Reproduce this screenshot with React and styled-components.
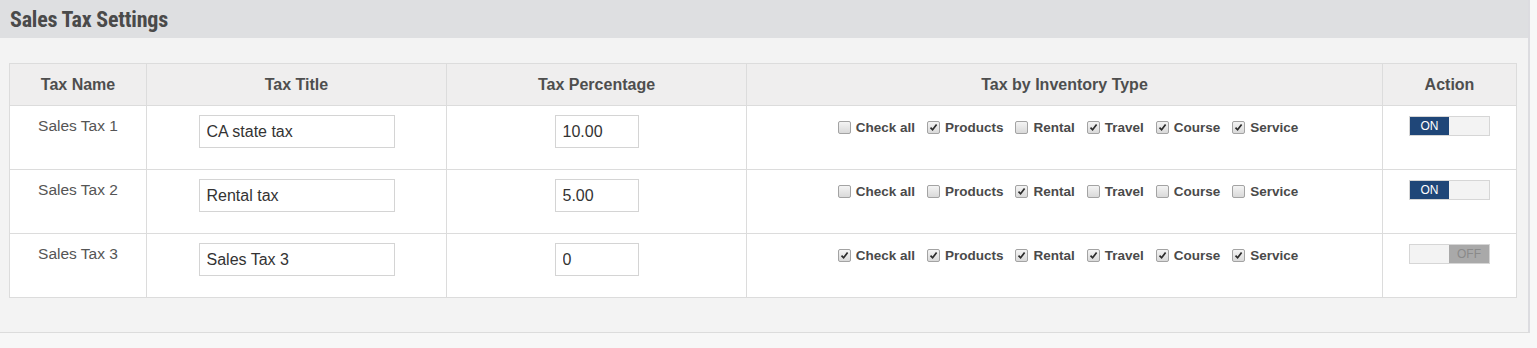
import React from "react"
import styled, { createGlobalStyle } from "styled-components"

const GlobalStyle = createGlobalStyle`
  html, body {
    margin: 0;
    padding: 0;
    background: #f7f7f7;
    font-family: "Liberation Sans", Arial, sans-serif;
  }
`

const Panel = styled.section`
  width: 1528px;
  height: 332px;
  background: #f3f3f3;
  border-right: 2px solid #dcdce0;
  border-bottom: 1px solid #dcdcdc;
  box-sizing: content-box;
`

const PanelHeader = styled.div`
  height: 38px;
  background: #dedfe1;
  display: flex;
  align-items: center;
  padding-left: 10px;
`

const Title = styled.h2`
  margin: 0;
  font-family: "Liberation Sans Narrow", "Roboto Condensed", Roboto, sans-serif;
  font-weight: 700;
  font-size: 22px;
  color: #4a4a4a;
  letter-spacing: -0.2px;
`

const Body = styled.div`
  padding: 25px 13px 0 9px;
`

const Table = styled.table`
  width: 1508px;
  border-collapse: collapse;
  table-layout: fixed;
  background: #fff;
`

const Th = styled.th`
  height: 41px;
  padding: 0 8px;
  background: #efeeee;
  border: 1px solid #dcdcdc;
  font-size: 16px;
  font-weight: 700;
  color: #4e4e4e;
  text-align: center;
  vertical-align: middle;
`

const Td = styled.td`
  height: 64px;
  box-sizing: border-box;
  padding: 9px 8px 0;
  border: 1px solid #dcdcdc;
  text-align: center;
  vertical-align: top;
`

const NameText = styled.div`
  font-size: 15.5px;
  line-height: 22px;
  color: #555;
`

const TextInput = styled.input`
  box-sizing: border-box;
  width: ${props => props.$width}px;
  height: 33px;
  padding: 0 7px;
  border: 1px solid #d4d4d4;
  background: #fff;
  font-family: "Liberation Sans", Arial, sans-serif;
  font-size: 16px;
  color: #333;
  outline: none;
`

const CheckGroup = styled.div`
  display: flex;
  justify-content: center;
  align-items: center;
  gap: 12px;
  height: 22px;
  margin: 1px 0 0 7px;
`

const CheckItem = styled.label`
  display: flex;
  align-items: center;
  gap: 5px;
  font-size: 13.5px;
  font-weight: 700;
  color: #4a4a4a;
`

const Box = styled.span`
  box-sizing: border-box;
  width: 13px;
  height: 13px;
  border: 1px solid #a3a3a3;
  border-radius: 2px;
  background: linear-gradient(#f4f4f4, #d9d9d9);
  display: flex;
  align-items: center;
  justify-content: center;
`

const Toggle = styled.div`
  display: inline-flex;
  width: 81px;
  height: 20px;
  box-sizing: border-box;
  border: 1px solid #d6d6d6;
  margin-top: 1px;
  font-size: 12px;
  background: #f3f3f3;
`

const ToggleHalf = styled.span`
  width: ${props => props.$w}px;
  display: flex;
  align-items: center;
  justify-content: center;
  background: ${props => props.$bg};
  color: ${props => props.$color};
`

const Checkbox = ({ checked, label }) => (
  <CheckItem>
    <Box>
      {checked && (
        <svg width="9" height="9" viewBox="0 0 9 9">
          <path d="M1.5 4.6 L3.6 6.8 L7.6 1.6" fill="none" stroke="#2b2b2b" strokeWidth="1.7" />
        </svg>
      )}
    </Box>
    {label}
  </CheckItem>
)

const Switch = ({ on }) => (
  <Toggle>
    {on ? (
      <>
        <ToggleHalf $w={39} $bg="#1f4678" $color="#fff">ON</ToggleHalf>
        <ToggleHalf $w={40} $bg="#f3f3f3" />
      </>
    ) : (
      <>
        <ToggleHalf $w={39} $bg="#f3f3f3" />
        <ToggleHalf $w={40} $bg="#a9a9a9" $color="#8a8a8a">OFF</ToggleHalf>
      </>
    )}
  </Toggle>
)

const types = ["Check all", "Products", "Rental", "Travel", "Course", "Service"]

const rows = [
  { name: "Sales Tax 1", title: "CA state tax", pct: "10.00", checks: [0, 1, 0, 1, 1, 1], on: true },
  { name: "Sales Tax 2", title: "Rental tax", pct: "5.00", checks: [0, 0, 1, 0, 0, 0], on: true },
  { name: "Sales Tax 3", title: "Sales Tax 3", pct: "0", checks: [1, 1, 1, 1, 1, 1], on: false },
]

const App = () => (
  <>
    <GlobalStyle />
    <Panel>
      <PanelHeader>
        <Title>Sales Tax Settings</Title>
      </PanelHeader>
      <Body>
        <Table>
          <colgroup>
            <col style={{ width: 137 }} />
            <col style={{ width: 300 }} />
            <col style={{ width: 300 }} />
            <col style={{ width: 636 }} />
            <col />
          </colgroup>
          <thead>
            <tr>
              <Th>Tax Name</Th>
              <Th>Tax Title</Th>
              <Th>Tax Percentage</Th>
              <Th>Tax by Inventory Type</Th>
              <Th>Action</Th>
            </tr>
          </thead>
          <tbody>
            {rows.map(row => (
              <tr key={row.name}>
                <Td>
                  <NameText>{row.name}</NameText>
                </Td>
                <Td>
                  <TextInput $width={196} defaultValue={row.title} />
                </Td>
                <Td>
                  <TextInput $width={84} defaultValue={row.pct} />
                </Td>
                <Td>
                  <CheckGroup>
                    {types.map((t, i) => (
                      <Checkbox key={t} label={t} checked={!!row.checks[i]} />
                    ))}
                  </CheckGroup>
                </Td>
                <Td>
                  <Switch on={row.on} />
                </Td>
              </tr>
            ))}
          </tbody>
        </Table>
      </Body>
    </Panel>
  </>
)

export default App
